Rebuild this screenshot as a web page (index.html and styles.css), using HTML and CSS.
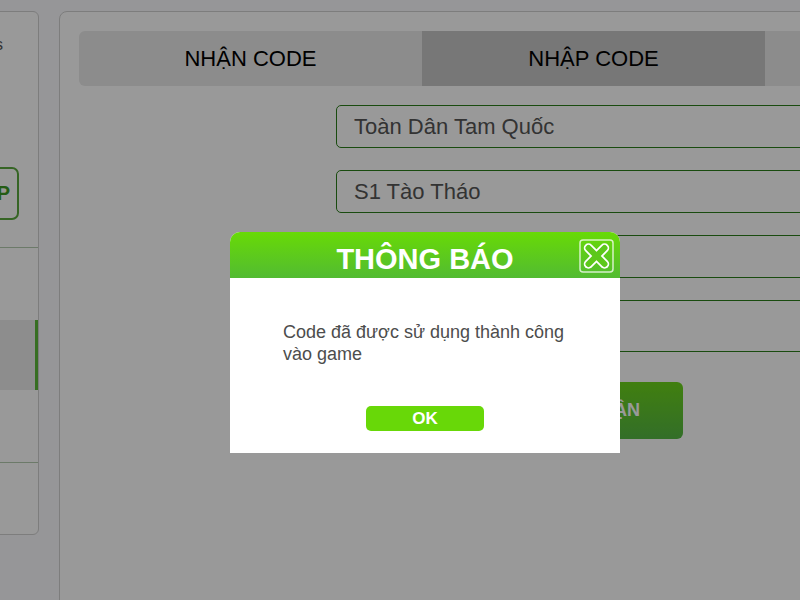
FILE: index.html
```html
<!DOCTYPE html>
<html lang="vi">
    <head>
        <meta charset="UTF-8" />
        <meta name="viewport" content="width=device-width, initial-scale=1.0" />
        <title>Giftcode</title>
        <link rel="stylesheet" href="styles.css">
    </head>
    <body>
        <div class="page">
            <!-- cột trái -->
            <aside class="side">
                <div class="side-title">Giftcodes</div>
                <div class="side-btn-row">
                    <a class="btn-nap" href="#">NẠP</a>
                </div>
                <ul class="side-menu">
                    <li></li>
                    <li class="active"></li>
                    <li></li>
                </ul>
            </aside>

            <!-- nội dung chính -->
            <div class="main">
                <div class="tabs">
                    <div class="tab">NHẬN CODE</div>
                    <div class="tab active">NHẬP CODE</div>
                    <div class="tab"></div>
                </div>

                <form class="code-form">
                    <input class="field" type="text" value="Toàn Dân Tam Quốc" />
                    <input class="field" type="text" value="S1 Tào Tháo" />
                    <input class="field" type="text" value="" />
                    <input class="field field-big" type="text" value="" />
                    <button class="btn-submit" type="button">XÁC NHẬN</button>
                </form>
            </div>
        </div>

        <!-- popup thông báo -->
        <div class="overlay"></div>
        <div class="modal">
            <div class="modal-head">
                THÔNG BÁO
                <a class="modal-close" href="#">
                    <svg width="35" height="34" viewBox="0 0 35 34">
                        <rect x="1" y="1" width="33" height="32" rx="3" fill="none" stroke="rgba(255,255,255,0.75)" stroke-width="1.5" />
                        <g stroke="#fff" stroke-width="9.5" stroke-linecap="round">
                            <line x1="9.5" y1="9" x2="25.5" y2="25" />
                            <line x1="25.5" y1="9" x2="9.5" y2="25" />
                        </g>
                        <g stroke="#5dc81b" stroke-width="6" stroke-linecap="round">
                            <line x1="9.5" y1="9" x2="25.5" y2="25" />
                            <line x1="25.5" y1="9" x2="9.5" y2="25" />
                        </g>
                    </svg>
                </a>
            </div>
            <div class="modal-body">
                <p class="modal-text">Code đã được sử dụng thành công vào game</p>
                <a class="btn-ok" href="#">OK</a>
            </div>
        </div>
    </body>
</html>
```

FILE: styles.css
```css
html,
body {
    margin: 0;
    overflow: hidden;
}
body {
    background: #fbfbfe;
    font-family: "Liberation Sans", Arial, sans-serif;
    height: 600px;
}
.page {
    display: flex;
    gap: 20px;
    margin-left: -161px;
    padding-top: 11px;
}

/* cột trái */
.side {
    flex: 0 0 200px;
    height: 524px;
    box-sizing: border-box;
    background: #fff;
    border: 1px solid #d0d0d0;
    border-radius: 6px;
    padding-top: 23px;
}
.side-title {
    text-align: right;
    padding-right: 35px;
    font-size: 16px;
    line-height: 20px;
    color: #555;
}
.side-btn-row {
    margin-top: 112px;
    text-align: right;
    padding-right: 19px;
}
.btn-nap {
    display: inline-block;
    height: 53px;
    box-sizing: border-box;
    line-height: 49px;
    padding: 0 7px 0 40px;
    border: 2px solid #5aa83e;
    border-radius: 7px;
    color: #3c9a22;
    font-weight: bold;
    font-size: 20px;
    text-decoration: none;
}
.side-menu {
    list-style: none;
    margin: 27px 0 0;
    padding: 0;
    border-top: 1px solid #b5cbb0;
    border-bottom: 1px solid #b5cbb0;
}
.side-menu li {
    height: 72px;
}
.side-menu li.active {
    height: 70px;
    background: #ececec;
    border-right: 3px solid #5cb83a;
}

/* nội dung chính */
.main {
    flex: 0 0 1100px;
    height: 700px;
    box-sizing: border-box;
    background: #fff;
    border: 1px solid #d0d0d0;
    border-radius: 8px;
    padding: 19px;
}
.tabs {
    display: flex;
    border-radius: 6px;
    overflow: hidden;
}
.tab {
    flex: 0 0 343px;
    height: 55px;
    line-height: 55px;
    text-align: center;
    font-size: 22px;
    color: #000;
    background: #e9e9e9;
}
.tab.active {
    background: #c6c6c6;
}
.code-form {
    margin: 19px 0 0 257px;
}
.field {
    display: block;
    width: 600px;
    height: 43px;
    box-sizing: border-box;
    margin: 0 0 22px;
    padding: 0 17px;
    border: 1px solid #2a7d19;
    border-radius: 5px;
    background: #fff;
    font-family: "Liberation Sans", Arial, sans-serif;
    font-size: 22px;
    color: #555;
    outline: none;
}
.field-big {
    height: 52px;
}
.btn-submit {
    display: block;
    margin: 30px 0 0 166px;
    width: 181px;
    height: 57px;
    border: 0;
    border-radius: 6px;
    background: linear-gradient(#6cd41a, #55b844);
    color: #fff;
    font-family: "Liberation Sans", Arial, sans-serif;
    font-weight: bold;
    font-size: 18px;
}

/* popup */
.overlay {
    position: fixed;
    left: 0;
    top: 0;
    right: 0;
    bottom: 0;
    background: rgba(0, 0, 0, 0.4);
}
.modal {
    position: fixed;
    left: 230px;
    top: 232px;
    width: 390px;
    background: #fff;
    border-radius: 10px 10px 0 0;
}
.modal-head {
    position: relative;
    height: 46px;
    box-sizing: border-box;
    padding-top: 9px;
    display: flex;
    align-items: center;
    justify-content: center;
    background: linear-gradient(#68da06, #52bb32);
    border-radius: 10px 10px 0 0;
    color: #fff;
    font-weight: bold;
    font-size: 29px;
}
.modal-close {
    position: absolute;
    right: 6px;
    top: 7px;
    display: block;
    width: 35px;
    height: 34px;
}
.modal-close svg {
    display: block;
}
.modal-body {
    padding: 43px 53px 22px;
}
.modal-text {
    margin: 0;
    font-size: 18px;
    line-height: 22px;
    color: #4d4d4d;
}
.btn-ok {
    display: block;
    width: 118px;
    height: 25px;
    margin: 41px auto 0;
    border-radius: 5px;
    background: #68d808;
    color: #fff;
    font-weight: bold;
    font-size: 17px;
    line-height: 25px;
    text-align: center;
    text-decoration: none;
}
```
